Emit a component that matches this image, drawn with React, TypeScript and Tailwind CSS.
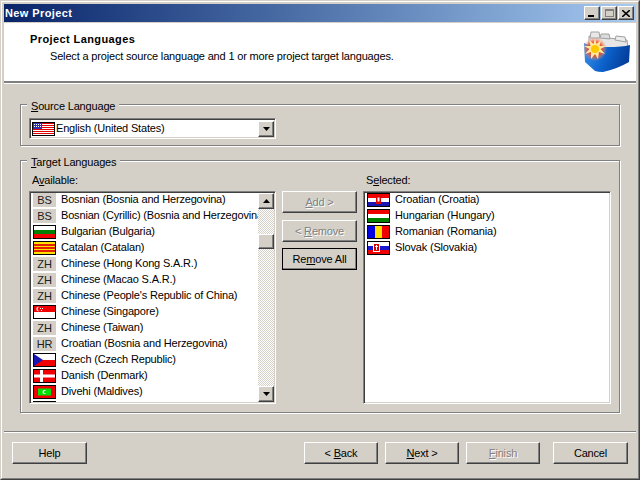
import React from 'react';

const raised = 'bg-[#d4d0c8] border border-t-white border-l-white border-r-[#404040] border-b-[#404040] shadow-[inset_-1px_-1px_0_#808080]';
const sunken = 'bg-white border border-t-[#808080] border-l-[#808080] border-r-white border-b-white shadow-[inset_1px_1px_0_#404040,inset_-1px_-1px_0_#d4d0c8]';
const etched = 'border border-[#808080] shadow-[inset_1px_1px_0_#fff,1px_1px_0_#fff]';

type Stripe = { color: string; y: number; h: number };

function Bands({ bands }: { bands: Stripe[] }) {
  return (
    <>
      {bands.map((b, i) => (
        <rect key={i} x="0" y={b.y} width="21" height={b.h} fill={b.color} />
      ))}
    </>
  );
}

function FlagArt({ name }: { name: string }) {
  switch (name) {
    case 'us':
      return (
        <>
          <rect width="21" height="12" fill="#fff" />
          {[0, 2, 4, 6, 8, 10].map((y) => (
            <rect key={y} x="0" y={y} width="21" height="1" fill="#e00000" />
          ))}
          <rect width="9" height="6" fill="#3030b0" />
          {[1, 3, 5, 7].map((x) =>
            [1, 3].map((y) => <rect key={x + '-' + y} x={x} y={y} width="1" height="1" fill="#fff" />)
          )}
        </>
      );
    case 'bg':
      return <Bands bands={[{ color: '#fff', y: 0, h: 4 }, { color: '#008000', y: 4, h: 4 }, { color: '#f00000', y: 8, h: 4 }]} />;
    case 'ca':
      return (
        <>
          <rect width="21" height="12" fill="#ffe000" />
          {[2, 5, 8].map((y) => (
            <rect key={y} x="0" y={y} width="21" height="2" fill="#e02000" />
          ))}
        </>
      );
    case 'sg':
      return (
        <>
          <rect width="21" height="12" fill="#fff" />
          <rect width="21" height="6" fill="#f00000" />
          <circle cx="4.5" cy="3" r="2.2" fill="#fff" />
          <circle cx="5.5" cy="3" r="2" fill="#f00000" />
          <rect x="6" y="2" width="1" height="1" fill="#fff" />
          <rect x="8" y="2" width="1" height="1" fill="#fff" />
          <rect x="7" y="4" width="1" height="1" fill="#fff" />
        </>
      );
    case 'cz':
      return (
        <>
          <rect width="21" height="12" fill="#fff" />
          <rect y="6" width="21" height="6" fill="#f00000" />
          <polygon points="0,0 9,6 0,12" fill="#1818b0" />
        </>
      );
    case 'dk':
      return (
        <>
          <rect width="21" height="12" fill="#f00000" />
          <rect x="6" width="3" height="12" fill="#fff" />
          <rect y="4.5" width="21" height="3" fill="#fff" />
        </>
      );
    case 'mv':
      return (
        <>
          <rect width="21" height="12" fill="#f00000" />
          <rect x="4" y="2.5" width="13" height="7" fill="#00e000" />
          <circle cx="10.5" cy="6" r="2" fill="#fff" />
          <circle cx="11.5" cy="6" r="1.6" fill="#00e000" />
        </>
      );
    case 'be':
      return (
        <>
          <rect width="21" height="12" fill="#fff" />
          <rect width="21" height="4" fill="#f00000" />
          <rect x="6" width="3" height="12" fill="#fff" />
        </>
      );
    case 'hr':
      return (
        <>
          <Bands bands={[{ color: '#f00000', y: 0, h: 4 }, { color: '#fff', y: 4, h: 4 }, { color: '#1818b0', y: 8, h: 4 }]} />
          <rect x="8" y="2" width="5" height="8" fill="#e00000" />
          <rect x="9.5" y="3.5" width="2" height="4" fill="#fff" />
        </>
      );
    case 'hu':
      return <Bands bands={[{ color: '#f00000', y: 0, h: 4 }, { color: '#fff', y: 4, h: 4 }, { color: '#008000', y: 8, h: 4 }]} />;
    case 'ro':
      return (
        <>
          <rect width="7" height="12" fill="#0000e0" />
          <rect x="7" width="7" height="12" fill="#ffe000" />
          <rect x="14" width="7" height="12" fill="#f00000" />
        </>
      );
    case 'sk':
      return (
        <>
          <Bands bands={[{ color: '#fff', y: 0, h: 4 }, { color: '#1818d0', y: 4, h: 4 }, { color: '#f00000', y: 8, h: 4 }]} />
          <rect x="5.5" y="1.5" width="6" height="8" fill="#e00000" stroke="#fff" strokeWidth="1" />
          <rect x="8" y="3" width="1" height="5" fill="#fff" />
          <rect x="7" y="4" width="3" height="1" fill="#fff" />
        </>
      );
    default:
      return null;
  }
}

function Flag({ name }: { name: string }) {
  return (
    <svg width="21" height="12" viewBox="0 0 21 12" className="shrink-0 border border-black box-content">
      <FlagArt name={name} />
    </svg>
  );
}

function Row({ flag, code, label }: { flag?: string; code?: string; label: string }) {
  return (
    <div className="flex items-start h-4 shrink-0 whitespace-nowrap">
      <div className="w-[23px] h-[14px] shrink-0 ml-[2px] mr-[5px] flex items-center justify-center bg-[#d4d0c8]">
        {flag ? <Flag name={flag} /> : <span className="text-[#202020]">{code}</span>}
      </div>
      <span className="h-[13px] flex items-center">{label}</span>
    </div>
  );
}

function Arrow({ up }: { up?: boolean }) {
  return (
    <svg width="7" height="4" viewBox="0 0 7 4" className={up ? '' : 'rotate-180'}>
      <polygon points="3.5,0 7,4 0,4" fill="#000" />
    </svg>
  );
}

function ScrollButton({ up }: { up?: boolean }) {
  return (
    <div className={`${raised} w-[16px] h-[16px] shrink-0 flex items-center justify-center`}>
      <Arrow up={up} />
    </div>
  );
}

function Button({ children, disabled, strong, className }: { children: React.ReactNode; disabled?: boolean; strong?: boolean; className?: string }) {
  return (
    <div className={`${strong ? 'outline outline-1 -outline-offset-1 outline-black' : ''} ${className ?? ''}`}>
      <div className={`${raised} h-full flex items-center justify-center ${disabled ? 'text-[#808080] [text-shadow:1px_1px_0_#fff]' : ''}`}>
        <span>{children}</span>
      </div>
    </div>
  );
}

function Logo() {
  return (
    <svg width="48" height="44" viewBox="0 0 48 44" className="-mt-px">
      <defs>
        <linearGradient id="box" x1="0" y1="0" x2="1" y2="0.25">
          <stop offset="0" stopColor="#3f94ea" />
          <stop offset="0.55" stopColor="#0c62cc" />
          <stop offset="1" stopColor="#04409c" />
        </linearGradient>
        <radialGradient id="glow">
          <stop offset="0" stopColor="#ff2c08" />
          <stop offset="0.6" stopColor="#f0502c" stopOpacity="0.9" />
          <stop offset="1" stopColor="#f09a88" stopOpacity="0" />
        </radialGradient>
      </defs>
      <polygon points="5,7 43,11 44,19 5,18" fill="#e6e6e6" stroke="#a0a0a0" />
      <polygon points="6,9 7,3 15,3 16,9" fill="#e8e8e8" stroke="#a0a0a0" />
      <polygon points="16,9 17,5 25,5 26,10" fill="#dcdcdc" stroke="#a0a0a0" />
      <polygon points="31,11 32,7 41,8 42,13" fill="#ececec" stroke="#a0a0a0" />
      <path d="M0 14Q10 19 24 18Q38 18 46 16L45 33Q33 40 19 43Q14 43 11 42L1 33Z" fill="url(#box)" />
      <circle cx="11" cy="20" r="12" fill="url(#glow)" />
      <polygon
        points="11,9 12.5,15 17,11 15.5,17 22,17 16.5,20 21,25 15,23 14,30 11,25 7,30 7,23 1,25 5.5,20 0,17 6.5,17 5,11 9.5,15"
        fill="#ffe9a0"
      />
      <circle cx="11" cy="20" r="4" fill="#ffc800" />
    </svg>
  );
}

export default function App() {
  const available = [
    { code: 'BS', label: 'Bosnian (Bosnia and Herzegovina)' },
    { code: 'BS', label: 'Bosnian (Cyrillic) (Bosnia and Herzegovina)' },
    { flag: 'bg', label: 'Bulgarian (Bulgaria)' },
    { flag: 'ca', label: 'Catalan (Catalan)' },
    { code: 'ZH', label: 'Chinese (Hong Kong S.A.R.)' },
    { code: 'ZH', label: 'Chinese (Macao S.A.R.)' },
    { code: 'ZH', label: "Chinese (People's Republic of China)" },
    { flag: 'sg', label: 'Chinese (Singapore)' },
    { code: 'ZH', label: 'Chinese (Taiwan)' },
    { code: 'HR', label: 'Croatian (Bosnia and Herzegovina)' },
    { flag: 'cz', label: 'Czech (Czech Republic)' },
    { flag: 'dk', label: 'Danish (Denmark)' },
    { flag: 'mv', label: 'Divehi (Maldives)' },
    { flag: 'be', label: 'Dutch (Belgium)' },
  ];
  const selected = [
    { flag: 'hr', label: 'Croatian (Croatia)' },
    { flag: 'hu', label: 'Hungarian (Hungary)' },
    { flag: 'ro', label: 'Romanian (Romania)' },
    { flag: 'sk', label: 'Slovak (Slovakia)' },
  ];

  return (
    <div className="w-[640px] h-[480px] overflow-hidden bg-[#d4d0c8] text-black text-[11px] leading-[13px] tracking-[-0.17px] font-['Liberation_Sans',sans-serif] border border-t-[#d4d0c8] border-l-[#d4d0c8] border-r-[#404040] border-b-[#404040]">
      <div className="h-full flex flex-col border border-t-white border-l-white border-r-[#808080] border-b-[#808080] p-[2px]">
        {/* title bar */}
        <div className="h-[18px] shrink-0 flex items-center justify-between pl-[1px] pr-[2px] bg-gradient-to-r from-[#0a246a] to-[#a6caf0]">
          <span className="text-white font-bold tracking-[0.4px]">New Project</span>
          <div className="flex items-center">
            <div className={`${raised} w-[16px] h-[14px] relative`}>
              <div className="absolute left-[3px] bottom-[2px] w-[6px] h-[2px] bg-black" />
            </div>
            <div className={`${raised} w-[16px] h-[14px] ml-[1px] flex items-center justify-center`}>
              <div className="w-[9px] h-[8px] border border-t-2 border-[#808080]" />
            </div>
            <div className={`${raised} w-[16px] h-[14px] ml-[1px] flex items-center justify-center`}>
              <svg width="8" height="7" viewBox="0 0 8 7">
                <path d="M0 0L8 7M8 0L0 7" stroke="#000" strokeWidth="1.6" />
              </svg>
            </div>
          </div>
        </div>

        {/* header */}
        <div className="h-[60px] shrink-0 mt-[1px] bg-white border-b-2 border-b-[#808080] flex justify-between pl-[26px] pr-[4px] pt-[7px]">
          <div>
            <div className="font-bold tracking-[0.4px] h-[17px] mt-px flex items-center">Project Languages</div>
            <div className="ml-[20px] mt-[2px]">Select a project source language and 1 or more project target languages.</div>
          </div>
          <Logo />
        </div>
        <div className="h-px shrink-0 bg-white" />

        {/* source group */}
        <div className="px-[16px] pt-[20px] flex flex-col">
          <div className={`${etched} relative h-[42px] pl-[8px] pt-[13px]`}>
            <span className="absolute left-[6px] -top-[5px] bg-[#d4d0c8] px-[4px]">
              <u>S</u>ource Language
            </span>
            <div className={`${sunken} w-[247px] h-[21px] flex items-center pl-[2px] pr-[1px]`}>
              <div className="mr-[1px] w-[23px] h-[14px] shrink-0 flex">
                <Flag name="us" />
              </div>
              <span className="flex-1">English (United States)</span>
              <ScrollButton />
            </div>
          </div>

          {/* target group */}
          <div className={`${etched} relative mt-[14px] h-[253px] flex pt-[13px] pl-[8px]`}>
            <span className="absolute left-[6px] -top-[5px] bg-[#d4d0c8] px-[4px]">
              <u>T</u>arget Languages
            </span>
            <div className="w-[247px] flex flex-col">
              <div className="h-[13px] pl-[3px]">
                A<u>v</u>ailable:
              </div>
              <div className={`${sunken} mt-[4px] h-[213px] flex p-[1px] overflow-hidden`}>
                <div className="flex-1 min-w-0 overflow-hidden flex flex-col">
                  {available.map((r, i) => (
                    <Row key={i} {...r} />
                  ))}
                </div>
                <div className="w-[16px] shrink-0 flex flex-col h-full bg-[repeating-conic-gradient(#d4d0c8_0_25%,#fff_0_50%)] bg-[length:2px_2px]">
                  <ScrollButton up />
                  <div className={`${raised} w-[16px] h-[15px] mt-[25px]`} />
                  <div className="flex-1" />
                  <ScrollButton />
                </div>
              </div>
            </div>

            <div className="w-[75px] ml-[6px] mt-[17px] flex flex-col">
              <Button disabled className="h-[22px]">
                <u>A</u>dd &gt;
              </Button>
              <Button disabled className="h-[22px] mt-[7px]">
                &lt; <u>R</u>emove
              </Button>
              <Button strong className="h-[22px] mt-[6px]">
                Re<u>m</u>ove All
              </Button>
            </div>

            <div className="w-[248px] ml-[6px] flex flex-col">
              <div className="h-[13px] pl-[3px]">
                S<u>e</u>lected:
              </div>
              <div className={`${sunken} mt-[4px] h-[213px] flex flex-col p-[1px] overflow-hidden`}>
                {selected.map((r, i) => (
                  <div key={i} className="flex items-start h-4 shrink-0 whitespace-nowrap">
                    <div className="w-[23px] h-[14px] shrink-0 ml-[2px] mr-[5px] flex">
                      <Flag name={r.flag} />
                    </div>
                    <span className="h-[13px] flex items-center">{r.label}</span>
                  </div>
                ))}
              </div>
            </div>
          </div>
        </div>

        {/* footer */}
        <div className="mt-[18px] h-[2px] shrink-0 border-t border-t-[#808080] border-b border-b-white" />
        <div className="flex pl-[8px] pt-[9px]">
          <Button className="w-[75px] h-[22px]">Help</Button>
          <Button className="w-[74px] h-[22px] ml-[217px]">
            &lt; <u>B</u>ack
          </Button>
          <Button className="w-[74px] h-[22px] ml-[7px]">
            <u>N</u>ext &gt;
          </Button>
          <Button disabled className="w-[74px] h-[22px] ml-[7px]">
            <u>F</u>inish
          </Button>
          <Button className="w-[75px] h-[22px] ml-[13px]">Cancel</Button>
        </div>
      </div>
    </div>
  );
}
